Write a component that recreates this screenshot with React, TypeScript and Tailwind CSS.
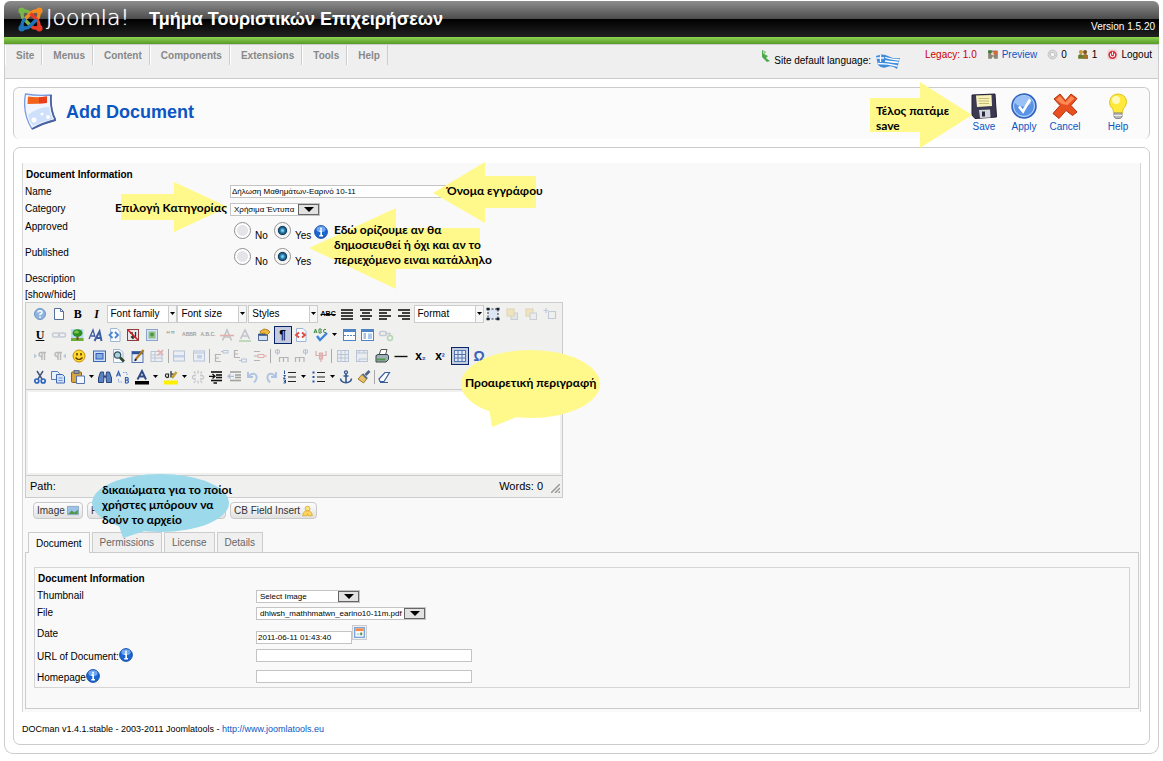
import React from "react";
import clsx from "clsx";

interface IconProps {
  children: React.ReactNode;
  className?: string;
  box?: string;
}

const Icon: React.FC<IconProps> = ({ children, className, box = "0 0 16 16" }) => (
  <svg aria-hidden="true" viewBox={box} fill="none" className={clsx("shrink-0", className ?? "h-4 w-4")}>
    {children}
  </svg>
);

/* -------- editor icons ------ */

const lines = (rows: number[][]) => (
  <g stroke="#111" strokeWidth="1.6">
    {rows.map(([x1, x2, y]) => (
      <path key={y} d={`M${x1} ${y}H${x2}`} />
    ))}
  </g>
);

const grid = (
  <>
    <rect x="2.5" y="2.5" width="11" height="11" fill="#dfe8f6" stroke="#5577ad" />
    <path d="M2.5 6.5H13.5M2.5 10H13.5M6 2.5V13.5M10 2.5V13.5" stroke="#5577ad" />
  </>
);

const page = <path d="M3.5 1.5H10L13 4.5V14.5H3.5Z" fill="#f7fbff" stroke="#9fb6d6" />;

const icons: Record<string, React.ReactNode> = {
  help: (
    <>
      <circle cx="8" cy="8" r="5.5" fill="#8fb4e0" stroke="#6f94c7" />
      <path d="M6 6.5Q6 4.7 8 4.7T10 6.5Q10 7.5 8 8.3V9.3M8 10.5V12" stroke="#fff" strokeWidth="1.5" />
    </>
  ),
  newdoc: (
    <>
      <path d="M3.5 2.5H9.5L12.5 5.5V13.5H3.5Z" fill="#fff" stroke="#56709c" />
      <path d="M9.5 2.5V5.5H12.5" stroke="#56709c" />
    </>
  ),
  full: lines([[2, 14, 4], [2, 14, 7], [2, 14, 10], [2, 14, 13]]),
  center: lines([[2, 14, 4], [4, 12, 7], [2, 14, 10], [4, 12, 13]]),
  left: lines([[2, 14, 4], [2, 10, 7], [2, 14, 10], [2, 10, 13]]),
  right: lines([[2, 14, 4], [6, 14, 7], [2, 14, 10], [6, 14, 13]]),
  layer: (
    <>
      <rect x="3" y="3" width="10" height="10" fill="#dce6f5" stroke="#333" strokeDasharray="2 1.5" />
      <path d="M1.500 3H4.500M11.500 3H14.500M1.500 13H4.500M11.500 13H14.500" stroke="#123" strokeWidth="2.600" />
    </>
  ),
  forward: (
    <>
      <rect x="7" y="7" width="6.500" height="6.500" fill="#c9cfd8" stroke="#8793a8" />
      <rect x="3" y="3" width="7" height="7" fill="#efd060" stroke="#b99f4b" />
    </>
  ),
  backward: (
    <>
      <rect x="3" y="3" width="7" height="7" fill="#efd060" stroke="#b99f4b" />
      <rect x="7" y="7" width="6.500" height="6.500" fill="#e2e5ea" stroke="#8793a8" />
    </>
  ),
  absolute: <path d="M6.500 5.500V12.500H13.500V5.500H6.500M1.500 4.500H6.500M4 2V7" stroke="#6d87b8" strokeWidth="1.200" />,
  link: (
    <g stroke="#7787a8" strokeWidth="1.500">
      <rect x="1.500" y="6" width="7" height="4" rx="2" />
      <rect x="7.500" y="6" width="7" height="4" rx="2" />
    </g>
  ),
  tree: (
    <>
      <rect x="2" y="2" width="12.500" height="12" fill="#b8dcf4" />
      <path d="M2 11H14.500V14H2Z" fill="#6fae36" />
      <path d="M7.500 8H9.500V13H7.500Z" fill="#7a4a1b" />
      <ellipse cx="8.500" cy="6" rx="5" ry="3.800" fill="#2e8f22" />
      <ellipse cx="7.500" cy="5" rx="2.500" ry="1.500" fill="#78c248" />
    </>
  ),
  styleprops: (
    <g stroke="#3c5ca4">
      <path d="M1 12L5 3L7 10M3 9H6.500" strokeWidth="1.300" />
      <path d="M6.500 14L11.500 4.500L13.500 14M8.500 11H13" strokeWidth="2" />
    </g>
  ),
  code: (
    <>
      {page}
      <path d="M5.500 5L2.500 8L5.500 11M8 5L11 8L8 11" stroke="#4a86d8" strokeWidth="1.800" />
    </>
  ),
  cleanup: (
    <>
      <rect x="2.500" y="2.500" width="11" height="11" fill="#e9e9e9" stroke="#8d3b3b" />
      <path d="M10.500 5V10H7M8.500 8L6.500 10L8.500 12M5 6H8" stroke="#333" strokeWidth="1.300" />
      <path d="M3 3L13 13" stroke="#d81e1e" strokeWidth="1.600" />
    </>
  ),
  media: (
    <>
      <rect x="2.500" y="2.500" width="11" height="11" fill="#d6e4f5" stroke="#8aa5cb" />
      <rect x="4.500" y="4.500" width="7" height="7" fill="#8fc08a" />
      <circle cx="8" cy="7.500" r="2" fill="#4f9a49" />
    </>
  ),
  del: (
    <>
      <path d="M3.500 13.500L8 3L12.500 13.500M5 10H11" stroke="#6a7388" strokeWidth="1.600" />
      <path d="M1 8.500H15" stroke="#d33434" strokeWidth="1.600" />
    </>
  ),
  ins: (
    <>
      <path d="M3.500 12L8 3L12.500 12M5 9H11" stroke="#6a7388" strokeWidth="1.600" />
      <path d="M2 14H14" stroke="#3f9840" strokeWidth="1.600" />
    </>
  ),
  attribs: (
    <>
      <path d="M2.500 7H11.500V13.500H2.500Z" fill="#d4e1f2" stroke="#4f6c98" />
      <path d="M2.500 7H11.500V8.800H2.500Z" fill="#33598f" />
      <path d="M4 4.500L8 2L12 3L14 5L11 8L8 6L5 7Z" fill="#efb73d" stroke="#a06c12" strokeWidth=".8" />
    </>
  ),
  nonbreaking: (
    <>
      {page}
      <path d="M6 5.500L3 8L6 10.500M9 5.500L12 8L9 10.500" stroke="#e0483a" strokeWidth="1.800" />
    </>
  ),
  spell: (
    <>
      <path d="M1 6L2.500 2L4 6M1.500 5H3.500M6 2V6H8Q9 5 7.500 4Q9 3 8 2ZM13 2.500Q10.500 1.500 10.500 4T13 5.500" stroke="#3d8a3d" />
      <path d="M4 9L7 13L14 6" stroke="#3c83dd" strokeWidth="2.400" />
    </>
  ),
  pagebreak: (
    <>
      <rect x="2.500" y="2.500" width="12" height="11" fill="#fff" stroke="#4e83c4" />
      <path d="M2.500 4H14.500" stroke="#4e83c4" strokeWidth="2" />
      <path d="M3 8.500H14" stroke="#4e83c4" strokeDasharray="2 1" />
    </>
  ),
  template: (
    <>
      <rect x="2.500" y="2.500" width="12" height="11" fill="#fff" stroke="#4e83c4" />
      <path d="M2.500 4H14.500" stroke="#4e83c4" strokeWidth="2" />
      <path d="M4.500 7H7M4.500 9H7M4.500 11H7" stroke="#4e83c4" />
      <rect x="9" y="6.500" width="4" height="5.500" fill="#a9c9ef" />
    </>
  ),
  linkadd: (
    <>
      <rect x="1.500" y="4.500" width="7" height="4" rx="2" stroke="#7787a8" strokeWidth="1.500" />
      <path d="M7 6.500H12V9" stroke="#7787a8" strokeWidth="1.500" />
      <circle cx="12" cy="11" r="2.500" stroke="#4fa850" strokeWidth="1.500" />
    </>
  ),
  ltr: (
    <>
      <path d="M2 5.500L5 8L2 10.500Z" fill="#5e7fb9" />
      <path d="M10 12V4.500M12.500 12V4.500M14 4.500H9Q7 4.500 7 6.500T9.500 8.500" stroke="#555" strokeWidth="1.400" />
    </>
  ),
  rtl: (
    <>
      <path d="M14 5.500L11 8L14 10.500Z" fill="#5e7fb9" />
      <path d="M6 12V4.500M8.500 12V4.500M10 4.500H5Q3 4.500 3 6.500T5.500 8.500" stroke="#555" strokeWidth="1.400" />
    </>
  ),
  smile: (
    <>
      <circle cx="8" cy="8" r="6" fill="#ffd92e" stroke="#c98c0b" />
      <path d="M6 5V7.500M10 5V7.500" stroke="#5c3700" strokeWidth="1.500" />
      <path d="M4.500 9.500Q8 13.500 11.500 9.500" stroke="#5c3700" strokeWidth="1.200" />
    </>
  ),
  fullscreen: (
    <>
      <rect x="2.500" y="3" width="12" height="10.500" fill="#cfe0fa" stroke="#3f67b1" />
      <rect x="5" y="5.500" width="7" height="5.500" fill="#88abe2" stroke="#2f5fb5" />
    </>
  ),
  preview: (
    <>
      {page}
      <circle cx="7.500" cy="7" r="3.200" fill="#a6d3cf" stroke="#3b4f6d" strokeWidth="1.200" />
      <path d="M10 9.500L14 13.500" stroke="#2c4a2e" strokeWidth="2.600" />
    </>
  ),
  edittable: (
    <>
      <rect x="2" y="3.500" width="11" height="11" fill="#e9effa" stroke="#5577ad" />
      <path d="M2 5H13" stroke="#2d5296" strokeWidth="2.500" />
      <path d="M5.500 11.500L13.500 2" stroke="#b07b21" strokeWidth="2.200" />
      <path d="M4.500 12.500L6.500 11.500" stroke="#111" strokeWidth="1.500" />
    </>
  ),
  deltable: (
    <>
      <rect x="2" y="3.500" width="11" height="10" fill="#e9effa" stroke="#5577ad" />
      <path d="M2 7H13M2 10H13M6 4V13" stroke="#5577ad" />
      <path d="M9 2L14 7M14 2L9 7" stroke="#e03030" strokeWidth="1.600" />
    </>
  ),
  rowprops: (
    <>
      <rect x="2.500" y="3" width="11" height="10" fill="#e4edfa" stroke="#4e73b0" />
      <path d="M3 7H13V9.500H3Z" fill="#6f9add" />
    </>
  ),
  cellprops: (
    <>
      <rect x="2.500" y="3" width="11" height="10" fill="#e4edfa" stroke="#4e73b0" />
      <path d="M3 5H13" stroke="#4e73b0" />
      <rect x="6" y="7" width="5" height="3.500" fill="#6f9add" />
    </>
  ),
  rowbefore: (
    <>
      <path d="M2 6.500H8M2 10H6M2 13.500H8M2.500 6V14" stroke="#445" strokeWidth="1.200" />
      <path d="M8 3.500H10M10 2.500H15V5H10Z" stroke="#4a6fc0" />
    </>
  ),
  rowafter: (
    <>
      <path d="M2 2.500H6M2 6H6M2 9.500H8M2.500 2V10" stroke="#445" strokeWidth="1.200" />
      <path d="M7 12.500H9M9.500 11H14.500V14H9.500Z" stroke="#4a6fc0" />
    </>
  ),
  delrow: (
    <>
      <path d="M2 3.500H8M2 12.500H8M2 8H6" stroke="#445" strokeWidth="1.200" />
      <path d="M6 6.500H12V9.500H6ZM12 8H15" stroke="#c33" />
    </>
  ),
  colbefore: (
    <>
      <path d="M3.500 1V7M1.500 2H5.500V5H1.500Z" stroke="#4a6fc0" />
      <path d="M5.500 14V9.500H14V14M9.500 14V9.500" stroke="#445" strokeWidth="1.200" />
    </>
  ),
  colafter: (
    <>
      <path d="M12.500 1V7M10.500 2H14.500V5H10.500Z" stroke="#4a6fc0" />
      <path d="M2.500 14V9.500H11V14M6.500 14V9.500" stroke="#445" strokeWidth="1.200" />
    </>
  ),
  delcol: <path d="M3 3V7.500H13V3M8 5V14M6.500 5H9.500V11H6.500Z" stroke="#b33" strokeWidth="1.200" />,
  grid,
  merge: (
    <>
      <rect x="2.500" y="2.500" width="11" height="11" fill="#dfe8f6" stroke="#5577ad" />
      <path d="M2.500 5H13.500M5 2.500V5M10 2.500V5M5 13.500V11H13.500" stroke="#5577ad" />
    </>
  ),
  print: (
    <>
      <path d="M5 7L7 1.500H13L11.500 7Z" fill="#fff" stroke="#555" />
      <path d="M2 7.500L4 6.500H13.500L14.500 8V11.500L12 14H2Z" fill="#9fb0b8" stroke="#37434c" />
      <path d="M3 10.500H11.500V12.500H3Z" fill="#4e9c4a" />
    </>
  ),
  hr: <path d="M1.500 8.500H14.500" stroke="#111" strokeWidth="1.400" />,
  cut: (
    <>
      <path d="M5 2L10 10M11 2L6 10" stroke="#44597f" strokeWidth="1.500" />
      <circle cx="4.800" cy="12" r="2" stroke="#2d65bf" strokeWidth="1.700" />
      <circle cx="11.200" cy="12" r="2" stroke="#2d65bf" strokeWidth="1.700" />
    </>
  ),
  copy: (
    <>
      <path d="M1.500 2.500H7.500L9.500 4.500V10.500H1.500Z" fill="#e8f0fc" stroke="#5479b9" />
      <path d="M6.500 5.500H12.500L14.500 7.500V14H6.500Z" fill="#d3e2f9" stroke="#3c66b0" />
      <path d="M8.500 9H12.500M8.500 11.500H12.500" stroke="#6d92d0" />
    </>
  ),
  paste: (
    <>
      <rect x="1.500" y="3" width="10" height="10.500" rx="1" fill="#dba63f" stroke="#8e6316" />
      <rect x="4" y="1.500" width="5" height="3" fill="#8a97a8" stroke="#55606e" strokeWidth=".8" />
      <path d="M6.500 7H14.500V14.500H6.500Z" fill="#f3f6fc" stroke="#5775ab" />
    </>
  ),
  find: (
    <>
      <path d="M3.500 3H6.500L7 8L6.500 13.500H1.500V9Z" fill="#5b82c2" stroke="#27457c" />
      <path d="M12.500 3H9.500L9 8L9.500 13.500H14.500V9Z" fill="#5b82c2" stroke="#27457c" />
      <path d="M6.500 7.500H9.500" stroke="#27457c" strokeWidth="2" />
    </>
  ),
  replace: (
    <>
      <path d="M1.500 7.500L3.500 2.500L5.500 7.500M2.300 6H4.700" stroke="#2f5fb5" strokeWidth="1.200" />
      <path d="M10.500 8.500V14H12.500Q14.500 12.500 12.500 11.200Q14 10 12.500 8.500ZM10.500 11.200H12.500" stroke="#2f5fb5" strokeWidth="1.200" />
      <path d="M8 3.500H12V6M3.500 10V13H7.500" stroke="#7ca0da" strokeDasharray="1.500 1" />
    </>
  ),
  forecolor: (
    <>
      <path d="M3.500 10.500L8 2L12 10.500M5 7.500H11" stroke="#2c4a84" strokeWidth="1.900" />
      <path d="M1 12H15V15.500H1Z" fill="#000" />
    </>
  ),
  backcolor: (
    <>
      <path d="M5 5H3Q1.500 7.500 4 8.500L5.500 8V4.500M8 2V8H10Q11.500 6.500 10 5H8" stroke="#222" strokeWidth="1.200" />
      <path d="M9 9L13.500 3" stroke="#c3a335" strokeWidth="2.500" />
      <path d="M1 11.500H15V15.500H1Z" fill="#fff000" />
    </>
  ),
  unlink: (
    <g stroke="#777e90" strokeWidth="1.300">
      <path d="M6 6.500H3.500Q1.500 8 3.500 10H6M10 6.500H12.500Q14.500 8 12.500 10H10" />
      <path d="M8 1.500V4.500M4 2.500L5.500 4.500M12 2.500L10.500 4.500M8 11.500V14.500M5.500 11.500L4 14M10.500 11.500L12 14" />
    </g>
  ),
  indent: (
    <>
      {lines([[3, 14, 3], [8, 14, 6], [8, 14, 8.5], [3, 14, 11.5]])}
      <path d="M1 7.300H7M4.500 5L7 7.300L4.500 9.600M5.500 14H9" stroke="#111" strokeWidth="1.300" />
    </>
  ),
  outdent: (
    <>
      {lines([[3, 14, 3], [8, 14, 6], [8, 14, 8.5], [3, 14, 11.5]])}
      <path d="M1 7.300H7M3.500 5L1 7.300L3.500 9.600" stroke="#345fb4" strokeWidth="1.300" />
    </>
  ),
  undo: <path d="M3 3V8H8M3.500 7.500Q7 3.500 10.500 5.500Q13.500 9 9 13.500" stroke="#3f72d0" strokeWidth="1.900" />,
  redo: <path d="M13 3V8H8M12.500 7.500Q9 3.500 5.500 5.500Q2.500 9 7 13.500" stroke="#3f72d0" strokeWidth="1.900" />,
  numlist: (
    <>
      <path d="M6 3.500H14M6 8H14M6 12.500H14" stroke="#222" strokeWidth="1.200" />
      <path d="M2.500 1.500V5M1.500 6.500H3.500L1.500 9.500H3.500M1.500 11H3.500V14H1.500M2 12.500H3.500" stroke="#274f9c" />
    </>
  ),
  bullist: (
    <>
      <path d="M6 3.500H14M6 8H14M6 12.500H14" stroke="#222" strokeWidth="1.200" />
      <path d="M1.500 2.500H3.500V4.500H1.500ZM1.500 7H3.500V9H1.500ZM1.500 11.500H3.500V13.500H1.500Z" fill="#2d55a7" />
    </>
  ),
  anchor: (
    <>
      <circle cx="8" cy="3.300" r="1.500" stroke="#36588f" strokeWidth="1.300" />
      <path d="M8 5V13.500M5.500 7H10.500M2.500 9.500Q3 13.500 8 13.800Q13 13.500 13.500 9.500" stroke="#36588f" strokeWidth="1.600" />
    </>
  ),
  brush: (
    <>
      <path d="M9.500 6L13.500 2" stroke="#4f6486" strokeWidth="2.600" />
      <path d="M6.500 5L11 9.500L7.500 14L2 10Z" fill="#e7c069" stroke="#a37a24" />
      <path d="M6.500 5L11 9.500" stroke="#5c6d87" strokeWidth="2" />
    </>
  ),
  eraser: (
    <>
      <path d="M3 10L9 3.500H13.500L8 12.500H4Z" fill="#fff" stroke="#3b5f9c" strokeWidth="1.200" />
      <path d="M4 13.500H12" stroke="#3b5f9c" />
    </>
  ),
};

/* glyph buttons of the editor toolbar, drawn as text */
const glyphs: Record<string, React.ReactNode> = {
  bold: <b className="font-['Liberation_Serif',serif] text-[12px] font-bold">B</b>,
  italic: <i className="font-['Liberation_Serif',serif] text-[12px] font-bold">I</i>,
  underline: <span className="font-['Liberation_Serif',serif] text-[12px] font-bold underline">U</span>,
  strike: <s className="text-[7px] font-bold">ABC</s>,
  cite: <span className="text-[9px] font-bold">“”</span>,
  abbr: <span className="text-[5px] font-bold">ABBR</span>,
  acronym: <span className="text-[5px] font-bold">A.B.C.</span>,
  visual: <span className="text-[12px] font-bold">¶</span>,
  sub: <span className="text-[12px] font-bold">x<span className="text-[9px] text-[#2a55b5]">₂</span></span>,
  sup: <span className="text-[12px] font-bold">x<span className="text-[9px] text-[#2a55b5]">²</span></span>,
  omega: <span className="text-[14px] font-bold text-[#3a62b8]">Ω</span>,
};

interface ToolProps {
  name: string;
  off?: boolean;
  active?: boolean;
  split?: boolean;
}

const Tool: React.FC<ToolProps> = ({ name, off, active, split }) => (
  <button
    type="button"
    aria-label={name}
    className={clsx(
      "flex h-[18px] shrink-0 items-center justify-center leading-none text-black",
      split ? "w-[28px] gap-[3px]" : "w-[18px]",
      off && "opacity-35",
      active && "border border-[#0a246a] bg-[#c2cbe0]"
    )}
  >
    {glyphs[name] ?? <Icon>{icons[name]}</Icon>}
    {split && <Caret />}
  </button>
);

const Caret = () => (
  <Icon className="h-[3px] w-[5px]" box="0 0 5 3">
    <path d="M0 0H5L2.500 3Z" fill="#000" />
  </Icon>
);

const Sep = () => <span className="h-[14px] w-px shrink-0 bg-[#a9a9a9]" />;

const ListBox = ({ label }: { label: string }) => (
  <div className="relative h-[18px] w-[70px] shrink-0 border border-[#ccc] bg-white">
    <select aria-label={label} className="block h-4 w-full appearance-none pl-[3px] text-[10px] leading-4 outline-none">
      <option>{label}</option>
    </select>
    <span className="pointer-events-none absolute inset-y-0 right-0 flex w-2 items-center justify-center border-l border-[#ccc] bg-[#f6f6f6]">
      <Caret />
    </span>
  </div>
);

/* -------- form parts ------ */

const Drop = ({ id, value, className }: { id: string; value: string; className: string }) => (
  <div className={clsx("relative h-[13px] border border-[#c4c4c4] bg-white", className)}>
    <select id={id} className="block h-[11px] w-full appearance-none pl-[3px] text-[8px] leading-[11px] outline-none">
      <option>{value}</option>
    </select>
    <span className="pointer-events-none absolute inset-y-0 right-0 flex w-[21px] items-center justify-center border border-[#666] bg-[#e2e2e2]">
      <Icon className="h-[5px] w-[10px]" box="0 0 10 5">
        <path d="M0 0H10L5 5Z" fill="#000" />
      </Icon>
    </span>
  </div>
);

const field = "h-[13px] border border-[#c4c4c4] bg-white px-px text-[8px] leading-[11px] outline-none";

const Info = () => (
  <Icon className="h-[14px] w-[14px]">
    <circle cx="8" cy="8" r="7.300" fill="#1c66d3" stroke="#0e429b" />
    <ellipse cx="8" cy="4.800" rx="5.200" ry="3.300" fill="#6fa8f0" />
    <path d="M8 3V5.300M6.300 7H8.200V12M6 12.300H10.300" stroke="#fff" strokeWidth="1.900" />
  </Icon>
);

const radio =
  "h-[17px] w-[17px] appearance-none rounded-full border border-[#8f8f8f] bg-[radial-gradient(circle_closest-side,#e4e4e9_68%,#fff_78%)] checked:bg-[radial-gradient(circle_closest-side,#8fd0f0_8%,#2a86b8_28%,#133a5c_56%,#e6e6e6_66%,#fff_90%)]";

const YesNo = ({ name, info }: { name: string; info?: boolean }) => (
  <div className="flex pt-1 pl-1">
    <input type="radio" id={`${name}-no`} name={name} className={radio} />
    <label htmlFor={`${name}-no`} className="w-[23px] pt-[6px] pl-1 leading-4">No</label>
    <input type="radio" id={`${name}-yes`} name={name} defaultChecked className={radio} />
    <label htmlFor={`${name}-yes`} className="w-[23px] pt-[6px] pl-1 leading-4">Yes</label>
    {info && <span className="pt-[3px]"><Info /></span>}
  </div>
);

/* -------- callouts ------ */

interface CalloutProps {
  className: string;
  textClass: string;
  box: string;
  fill?: string;
  shape: React.ReactNode;
  children: React.ReactNode;
}

const Callout: React.FC<CalloutProps> = ({ className, textClass, box, fill = "#fff98b", shape, children }) => (
  <div className={clsx("pointer-events-none absolute z-10", className)}>
    <svg aria-hidden="true" viewBox={box} fill={fill} className="h-full w-full">{shape}</svg>
    <p className={clsx("absolute font-['Lato',sans-serif] text-[12px] leading-[15px] font-bold whitespace-nowrap text-black", textClass)}>
      {children}
    </p>
  </div>
);

const menu = ["Site", "Menus", "Content", "Components", "Extensions", "Tools", "Help"];

const arm = "M4 4L4 7.500Q4 10 6 12L12.500 18.500M4 4L7.500 4Q10 4 12 6L13.500 7.500";
const joomla = [
  { color: "#7ab648", turn: "rotate(0 12.500 12.500)" },
  { color: "#f58b20", turn: "rotate(90 12.500 12.500)" },
  { color: "#ea3a24", turn: "rotate(180 12.500 12.500)" },
  { color: "#1d74bb", turn: "rotate(270 12.500 12.500)" },
];

const actions = [
  {
    label: "Save",
    width: "w-[40px]",
    art: (
      <>
        <path d="M1 2L24 1L25.500 24L4 25.500L1 22Z" fill="#3c3a52" stroke="#22202f" />
        <path d="M5 2.500L20.500 2L21 13L6 14Z" fill="#f7f2bb" />
        <path d="M7.500 5.500H18M7.500 8H18M8 10.500H18" stroke="#c5bc74" />
        <path d="M8 17L19 16.500L19.500 24.500L9 25Z" fill="#d3d6dc" />
        <path d="M11 18.500H14V23.500H11Z" fill="#2b2a3a" />
      </>
    ),
  },
  {
    label: "Apply",
    width: "w-[40px]",
    art: (
      <>
        <circle cx="13" cy="13" r="12" fill="#5b93e6" stroke="#2d60bd" strokeWidth="1.500" />
        <circle cx="13" cy="13" r="10.500" stroke="#c3dbfa" />
        <ellipse cx="12" cy="8" rx="8.500" ry="5.500" fill="#9bc0f5" />
        <path d="M8 13.500L12 18.500L19 6.500" stroke="#fff" strokeWidth="2.600" />
      </>
    ),
  },
  {
    label: "Cancel",
    width: "w-[42px]",
    art: (
      <>
        <path d="M2 6L8 1L13.500 7.500L19 1L25 5.500L19 12.500L25 19L20.500 22.500L14 17.500L7 25.500L1 20.500L8 12.500Z" fill="#e8501f" stroke="#b3330e" />
        <path d="M4 6.500L8 3L13.500 9.500L19 3L22.500 5.500L15.500 12L10 11Z" fill="#ff8a55" />
      </>
    ),
  },
  {
    label: "Help",
    width: "ml-3 w-[40px]",
    art: (
      <>
        <path d="M13 1Q21.500 1.500 21.500 9.500Q21 13.500 18 16L17.500 20H8.500L8 16Q4.500 13.500 4.500 9.500Q5 1.500 13 1Z" fill="#ffe93c" stroke="#e3c516" />
        <ellipse cx="11" cy="7" rx="4" ry="4" fill="#fff9b8" />
        <path d="M9 20H17V24L15 25.500H11L9 24Z" fill="#b9b9b9" stroke="#8a8a8a" />
        <path d="M9 22.500H17" stroke="#eee" />
      </>
    ),
  },
];

const xtd =
  "flex h-[17px] items-center justify-between rounded-[4px] border border-[#c9c9c9] bg-gradient-to-b from-[#fdfdfd] to-[#e2e2e2] px-[3px] text-[10px] whitespace-nowrap text-[#333]";

const tab = "h-5 border border-b-0 border-[#ccc] bg-[#f0f0f0] px-[7px]";

export default function App() {
  return (
    <div className="bg-white px-1 pt-px font-['Liberation_Sans',Arial,sans-serif] text-[10px] text-black">
      {/* -------- header ------ */}
      <header className="relative flex h-9 items-center rounded-t-[6px] bg-[linear-gradient(#8d8d8d,#4c4c4c_50%,#000_50%,#222)] pl-[14px]">
        <Icon className="h-[25px] w-[25px]" box="0 0 25 25">
          {joomla.map(({ color, turn }) => (
            <g key={color} transform={turn}>
              <path d={arm} stroke={color} strokeWidth="3.400" />
              <circle cx="3.700" cy="3.700" r="3.200" fill={color} />
            </g>
          ))}
        </Icon>
        <span className="ml-[3px] w-[88px] pb-[2px] font-['DejaVu_Sans',sans-serif] text-[22px] leading-8 font-extralight text-white [text-shadow:0_0_1px_#fff]">
          Joomla!
        </span>
        <h1 className="ml-[15px] text-[18px] leading-9 font-bold text-white">Τμήμα Τουριστικών Επιχειρήσεων</h1>
        <span className="absolute right-1 bottom-1 leading-3 text-white">Version 1.5.20</span>
      </header>
      <div className="h-[7px] bg-gradient-to-b from-[#8fd551] to-[#579a29]" />

      {/* -------- menu bar ------ */}
      <div className="flex h-[35px] items-start justify-between border border-[#ccc] bg-[#efefef]">
        <nav className="flex">
          {menu.map((item) => (
            <button key={item} type="button" className="h-5 border-r border-l border-r-[#ccc] border-l-white pr-[7px] pl-[10px] font-bold text-[#888]">
              {item}
            </button>
          ))}
        </nav>
        <div className="flex pr-[6px] leading-5">
          <div className="flex">
            <Icon className="mt-1 h-[14px] w-[10px]" box="0 0 10 14">
              <path d="M1 1L5 3L3 5L7 7L5 9L9 12L6 13L1 8Z" fill="#4caa4a" />
              <path d="M2 2L4 3L2 5Z" fill="#c3e6b8" />
            </Icon>
            <span className="pt-[6px] pl-[3px]">Site default language:</span>
            <Icon className="mt-2 ml-1 h-[17px] w-[26px]" box="0 0 26 17">
              <path d="M1 3Q8 0 13 3T25 5L22 16Q17 12 12 14T3 12Z" fill="#3d8bdc" />
              <path d="M10 4.500Q17 6.500 24.500 7M10 8Q17 9 23.500 9.500M3 10.500Q13 10.500 22.500 13M1.500 5H9M5.500 2V9" stroke="#fff" strokeWidth="1.300" />
            </Icon>
          </div>
          <a href="#legacy" className="ml-6 text-[#c00]">Legacy: 1.0</a>
          <a href="#preview" className="ml-[10px] flex text-[#0b55c4]">
            <Icon className="mt-1 mr-[3px] h-[11px] w-[12px]">
              <path d="M1 2H15V14H10L8 10L6 14H1Z" fill="#8a8577" />
              <path d="M1 2H6V6H1Z" fill="#3d7a35" />
              <path d="M9 3H14V8H9Z" fill="#d9653a" />
              <path d="M5 6L8 4L10 9H6Z" fill="#e8d9b5" />
            </Icon>
            Preview
          </a>
          <span className="ml-[10px] flex">
            <Icon className="mt-1 mr-[3px] h-[11px] w-[11px]">
              <circle cx="8" cy="8" r="6.500" fill="#dcdcdc" stroke="#b4b4b4" />
              <path d="M4 6L9 5L12 9L7 12Z" fill="#fff" stroke="#aaa" />
            </Icon>
            0
          </span>
          <span className="ml-[10px] flex">
            <Icon className="mt-1 mr-[3px] h-[11px] w-[12px]">
              <circle cx="5" cy="4.500" r="3" fill="#c99a3a" />
              <circle cx="11" cy="4.500" r="3" fill="#7a5a2a" />
              <path d="M1 14V9Q5 6 8 9Q11 6 15 9V14Z" fill="#6b7a2e" />
              <path d="M8 9Q11 6 15 9V14H8Z" fill="#a5702a" />
            </Icon>
            1
          </span>
          <button type="button" className="ml-[10px] flex h-5 leading-5">
            <Icon className="mt-1 mr-[3px] h-[11px] w-[11px]">
              <rect x=".5" y=".5" width="15" height="15" rx="4" fill="#f4d3d3" />
              <circle cx="8" cy="8.500" r="6" fill="#d7263a" />
              <path d="M8 4V8.500M5.500 6.500Q4 11.500 8 11.500T10.500 6.500" stroke="#fff" strokeWidth="1.600" />
            </Icon>
            Logout
          </button>
        </div>
      </div>

      <div className="rounded-b-[9px] border-x border-b border-[#ccc] px-2 pt-2 pb-2">
        {/* -------- title and actions ------ */}
        <div className="relative flex h-[52px] justify-between rounded-[6px] border border-b-0 border-[#ccc] bg-[#fbfbfb] pr-[11px] pl-[10px]">
          <div className="flex items-center pb-1">
            <Icon className="h-[38px] w-8" box="0 0 32 38">
              <path d="M1.500 1Q13 3 27 2Q26 17 31.500 27Q19 30 8 36Q-2 20 1.500 1Z" fill="#f1f6fe" stroke="#7b9be0" strokeWidth="1.300" />
              <path d="M27 2Q26 17 31.500 27Q19 30 8 36" stroke="#4a62a0" strokeWidth="1.800" />
              <path d="M4 22Q14 14 25 14Q26 21 29 26Q19 28 9 33Q5 28 4 22Z" fill="#cfe0fa" />
              <path d="M4 3.500Q13 5 23 3.500V10Q13 11 3.500 11Z" fill="#f4631b" />
              <path d="M15 4.300L23 3.500V10L15 10.600Z" fill="#ea3f1d" />
              <circle cx="10" cy="27" r="2.500" fill="#fff" />
              <circle cx="18" cy="21" r="1.500" fill="#fff" />
              <circle cx="24" cy="24" r="2" fill="#fff" />
            </Icon>
            <h2 className="pl-[10px] text-[18px] leading-6 font-bold text-[#0b55c4]">Add Document</h2>
          </div>
          <div className="flex pt-1">
            {actions.map(({ label, width, art }) => (
              <button key={label} type="button" className={clsx("flex flex-col items-center pt-px leading-[14px] text-[#0b55c4]", width)}>
                <Icon className="h-[27px] w-[27px]" box="0 0 27 27">{art}</Icon>
                {label}
              </button>
            ))}
          </div>
          <Callout
            className="-top-[6px] right-[177px] h-[66px] w-[102px]"
            textClass="top-[21px] left-[6px]"
            box="0 0 102 66"
            shape={<path d="M0 16H50V0L102 33L50 66V50H0Z" />}
          >
            Τέλος πατάμε
            <br />
            save
          </Callout>
        </div>

        {/* -------- content ------ */}
        <div className="mt-2 rounded-[7px] border border-[#ccc] px-2 pt-[15px]">
          <form className="relative border-x border-[#d5d5d5] bg-[#f9f9f9] pt-[3px] pr-px pb-[3px] pl-0.5 leading-[17px]">
            <h3 className="pl-px font-bold">Document Information</h3>
            <div className="grid grid-cols-[205px_1fr] grid-rows-[17px_18px_26px_26px_18px]">
              <label htmlFor="name">Name</label>
              <div className="flex pt-[2px]">
                <input id="name" defaultValue="Δήλωση Μαθημάτων-Εαρινό 10-11" className={clsx(field, "w-[216px]")} />
              </div>
              <label htmlFor="category">Category</label>
              <div className="pt-[3px]">
                <Drop id="category" value="Χρήσιμα Έντυπα" className="w-[90px]" />
              </div>
              <span>Approved</span>
              <YesNo name="approved" info />
              <span>Published</span>
              <YesNo name="published" />
              <label htmlFor="description">Description</label>
            </div>
            <button type="button" className="block h-[14px] leading-[14px]">[show/hide]</button>

            {/* -------- editor ------ */}
            <div className="w-[538px] border border-[#ccc] bg-[#f0f0ee]">
              <div className="border-b border-[#ccc] pb-[2px] pl-[5px]">
                <div className="flex h-[21px] w-[528px] items-center justify-between">
                  <Tool name="help" />
                  <Tool name="newdoc" />
                  <Tool name="bold" />
                  <Tool name="italic" />
                  <ListBox label="Font family" />
                  <ListBox label="Font size" />
                  <ListBox label="Styles" />
                  <Tool name="strike" />
                  <Tool name="full" />
                  <Tool name="center" />
                  <Tool name="left" />
                  <Tool name="right" />
                  <ListBox label="Format" />
                  <Tool name="layer" />
                  <Tool name="forward" off />
                  <Tool name="backward" off />
                  <Tool name="absolute" off />
                </div>
                <div className="flex h-[21px] w-[364px] items-center justify-between">
                  <Tool name="underline" />
                  <Tool name="link" off />
                  <Tool name="tree" />
                  <Tool name="styleprops" />
                  <Tool name="code" />
                  <Tool name="cleanup" />
                  <Tool name="media" />
                  <Tool name="cite" off />
                  <Tool name="abbr" off />
                  <Tool name="acronym" off />
                  <Tool name="del" off />
                  <Tool name="ins" off />
                  <Tool name="attribs" />
                  <Tool name="visual" active />
                  <Tool name="nonbreaking" />
                  <Tool name="spell" split />
                  <Tool name="pagebreak" />
                  <Tool name="template" />
                  <Tool name="linkadd" off />
                </div>
                <div className="flex h-[21px] w-[457px] items-center justify-between">
                  <Tool name="ltr" off />
                  <Tool name="rtl" off />
                  <Tool name="smile" />
                  <Tool name="fullscreen" />
                  <Tool name="preview" />
                  <Tool name="edittable" />
                  <Tool name="deltable" off />
                  <Sep />
                  <Tool name="rowprops" off />
                  <Tool name="cellprops" off />
                  <Sep />
                  <Tool name="rowbefore" off />
                  <Tool name="rowafter" off />
                  <Tool name="delrow" off />
                  <Sep />
                  <Tool name="colbefore" off />
                  <Tool name="colafter" off />
                  <Tool name="delcol" off />
                  <Sep />
                  <Tool name="grid" off />
                  <Tool name="merge" off />
                  <Tool name="print" />
                  <Tool name="hr" />
                  <Tool name="sub" />
                  <Tool name="sup" />
                  <Tool name="grid" active />
                  <Tool name="omega" />
                </div>
                <div className="flex h-[21px] w-[362px] items-center justify-between">
                  <Tool name="cut" />
                  <Tool name="copy" />
                  <Tool name="paste" split />
                  <Tool name="find" />
                  <Tool name="replace" />
                  <Tool name="forecolor" split />
                  <Tool name="backcolor" split />
                  <Tool name="unlink" off />
                  <Tool name="indent" />
                  <Tool name="outdent" off />
                  <Tool name="undo" off />
                  <Tool name="redo" off />
                  <Tool name="numlist" split />
                  <Tool name="bullist" split />
                  <Tool name="anchor" />
                  <Tool name="brush" />
                  <Sep />
                  <Tool name="eraser" />
                </div>
              </div>
              <textarea id="description" className="block h-[85px] w-full resize-none border-2 border-[#f0f0ee] bg-white p-1 outline-none" />
              <div className="flex h-[22px] items-center justify-between border-t border-[#ccc] pr-[2px] pl-1 text-[11px]">
                <span>Path:</span>
                <span className="flex items-center gap-2">
                  Words: 0
                  <Icon className="mt-1 h-[9px] w-[9px]" box="0 0 9 9">
                    <path d="M0 9L9 0M4 9L9 4M7.500 9L9 7.500" stroke="#999" strokeWidth="1.500" />
                  </Icon>
                </span>
              </div>
            </div>

            <div className="mt-1 ml-2 flex gap-1">
              <button type="button" className={clsx(xtd, "w-[50px]")}>
                Image
                <Icon className="h-[11px] w-[12px]">
                  <path d="M0 2H16V14H0Z" fill="#9dc3e8" stroke="#7b98b5" />
                  <path d="M1 13L6 8L10 11L15 7V13Z" fill="#4f9a49" />
                </Icon>
              </button>
              <button type="button" aria-label="Pagebreak" className={clsx(xtd, "w-[66px]")}>P</button>
              <button type="button" aria-label="Read more" className={clsx(xtd, "w-[69px]")} />
              <button type="button" className={clsx(xtd, "w-[87px]")}>
                CB Field Insert
                <Icon className="h-[12px] w-[11px]">
                  <circle cx="8" cy="4.500" r="3.500" fill="#ffe27a" stroke="#d39d1e" />
                  <path d="M5 8Q1 10 1 15H7L8 12L9 15H15Q15 10 11 8Z" fill="#ffd75e" stroke="#d39d1e" />
                </Icon>
              </button>
            </div>

            {/* -------- tabs ------ */}
            <div className="mt-[13px] flex gap-[2px] pl-[3px] text-[#666]">
              <button type="button" className="relative -mb-px h-[21px] border border-b-0 border-[#ccc] bg-[#f9f9f9] px-[7px] text-black">Document</button>
              <button type="button" className={tab}>Permissions</button>
              <button type="button" className={tab}>License</button>
              <button type="button" className={tab}>Details</button>
            </div>
            <div className="border border-[#ccc] px-2 pt-[14px] pb-5">
              <div className="border border-[#d5d5d5] px-0.5 pt-[2px] pb-px">
                <h3 className="pl-px font-bold">Document Information</h3>
                <div className="grid grid-cols-[219px_1fr] grid-rows-[17px_17px_26px_21px_18px]">
                  <label htmlFor="thumb">Thumbnail</label>
                  <div className="pt-[3px]">
                    <Drop id="thumb" value="Select Image" className="w-[104px]" />
                  </div>
                  <label htmlFor="file">File</label>
                  <div className="pt-[3px]">
                    <Drop id="file" value="dhlwsh_mathhmatwn_earino10-11m.pdf" className="w-[170px]" />
                  </div>
                  <label htmlFor="date" className="pt-1">Date</label>
                  <div className="flex items-end pb-[3px]">
                    <input id="date" defaultValue="2011-06-11 01:43:40" className={clsx(field, "w-[96px]")} />
                    <button type="button" aria-label="Pick a date" className="mb-1 flex h-[15px] w-[15px] items-center justify-center border border-[#ccc] bg-[#f0f0f0]">
                      <Icon className="h-[11px] w-[11px]">
                        <rect x="1" y="1" width="14" height="14" fill="#fff" stroke="#7ba7dc" strokeWidth="2" />
                        <path d="M2 2H14V6H2Z" fill="#f58a4b" />
                        <path d="M4 9H8V12H4Z" fill="#b9d3f0" />
                        <path d="M9 8H12V12H9Z" fill="#4f9a49" />
                      </Icon>
                    </button>
                  </div>
                  <label htmlFor="url" className="flex pt-px">URL of Document:<Info /></label>
                  <div className="pt-[2px]">
                    <input id="url" className={clsx(field, "block w-[216px]")} />
                  </div>
                  <label htmlFor="home" className="flex pt-px">Homepage<Info /></label>
                  <div className="pt-[2px]">
                    <input id="home" className={clsx(field, "block w-[216px]")} />
                  </div>
                </div>
              </div>
            </div>

            <Callout
              className="top-[19px] left-[98px] h-[50px] w-[107px]"
              textClass="top-[18px] -left-[6px]"
              box="0 0 107 50"
              shape={<path d="M0 12H53V0L107 25L53 50V38H0Z" />}
            >
              Επιλογή Κατηγορίας
            </Callout>
            <Callout
              className="-top-px left-[410px] h-[61px] w-[103px]"
              textClass="top-[21px] left-[14px]"
              box="0 0 103 61"
              shape={<path d="M103 14H52V0L0 31L52 61V46H103Z" />}
            >
              Όνομα εγγράφου
            </Callout>
            <Callout
              className="top-[45px] left-[286px] h-[81px] w-[171px]"
              textClass="top-[14px] left-[25px]"
              box="0 0 171 81"
              shape={<path d="M171 20H87V0L0 40L87 81V61H171Z" />}
            >
              Εδώ ορίζουμε αν θα
              <br />
              δημοσιευθεί ή όχι και αν το
              <br />
              περιεχόμενο ειναι κατάλληλο
            </Callout>
            <Callout
              className="top-[187px] left-[438px] h-[77px] w-[139px]"
              textClass="top-[25px] left-1"
              box="0 0 139 77"
              shape={
                <>
                  <ellipse cx="69.500" cy="34" rx="69.500" ry="34" />
                  <path d="M28 58L31 77L58 66Z" />
                </>
              }
            >
              Προαιρετική περιγραφή
            </Callout>
            <Callout
              className="top-[310px] left-[69px] h-[65px] w-[137px]"
              textClass="top-[9px] left-[10px]"
              box="0 0 137 65"
              fill="#9cd9ea"
              shape={
                <>
                  <ellipse cx="68.500" cy="30" rx="68.500" ry="29" />
                  <path d="M26 50L31 65L56 57Z" />
                </>
              }
            >
              δικαιώματα για το ποίοι
              <br />
              χρήστες μπόρουν να
              <br />
              δούν το αρχείο
            </Callout>
          </form>
          <footer className="pt-[9px] pb-[6px] text-[9px] leading-[17px]">
            DOCman v1.4.1.stable - 2003-2011 Joomlatools -{" "}
            <a href="http://www.joomlatools.eu" className="text-[#0b55c4]">http://www.joomlatools.eu</a>
          </footer>
        </div>
      </div>
    </div>
  );
}
